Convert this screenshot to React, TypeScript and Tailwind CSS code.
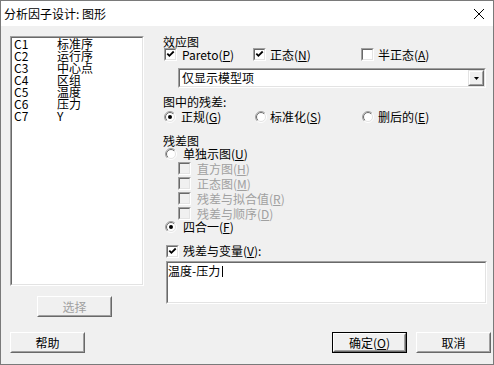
import React from "react";

function Check({ on, disabled }: { on?: boolean; disabled?: boolean }) {
  return (
    <div className="w-[13px] h-[13px] shrink-0 border border-t-[#a0a0a0] border-l-[#a0a0a0] border-r-white border-b-white">
      <div
        className={`w-full h-full border border-t-[#696969] border-l-[#696969] border-r-[#e3e3e3] border-b-[#e3e3e3] flex items-center justify-center ${
          disabled ? "bg-[#f0f0f0]" : "bg-white"
        }`}
      >
        {on && (
          <svg width="9" height="9" viewBox="0 0 9 9">
            <path d="M1.3 3.6 L3.4 5.8 L7.7 1.5" stroke="black" strokeWidth="1.8" fill="none" />
          </svg>
        )}
      </div>
    </div>
  );
}

function Radio({ on }: { on?: boolean }) {
  return (
    <svg width="12" height="12" viewBox="0 0 12 12" className="shrink-0">
      <defs>
        <linearGradient id="rgo" x1="0" y1="0" x2="1" y2="1">
          <stop offset="0.5" stopColor="#a0a0a0" />
          <stop offset="0.5" stopColor="#ffffff" />
        </linearGradient>
        <linearGradient id="rgi" x1="0" y1="0" x2="1" y2="1">
          <stop offset="0.5" stopColor="#696969" />
          <stop offset="0.5" stopColor="#e3e3e3" />
        </linearGradient>
      </defs>
      <circle cx="6" cy="6" r="5.5" fill="none" stroke="url(#rgo)" />
      <circle cx="6" cy="6" r="4.5" fill="white" stroke="url(#rgi)" />
      {on && <circle cx="6" cy="6" r="2" fill="black" />}
    </svg>
  );
}

function Btn({
  children,
  def,
  disabled,
  className = "",
}: {
  children: React.ReactNode;
  def?: boolean;
  disabled?: boolean;
  className?: string;
}) {
  const inner = (
    <div className="w-full h-full border border-t-white border-l-white border-r-[#696969] border-b-[#696969]">
      <div
        className={`w-full h-full border border-t-[#f0f0f0] border-l-[#f0f0f0] border-r-[#a0a0a0] border-b-[#a0a0a0] bg-[#f0f0f0] flex items-center justify-center text-[12px] ${
          disabled ? "text-[#a0a0a0]" : "text-black"
        }`}
      >
        {children}
      </div>
    </div>
  );
  if (def) {
    return <div className={`w-[75px] h-[21px] border border-black ${className}`}>{inner}</div>;
  }
  return <div className={`w-[75px] h-[21px] ${className}`}>{inner}</div>;
}

function Sunken({ className = "", children }: { className?: string; children?: React.ReactNode }) {
  return (
    <div className={`border border-t-[#a0a0a0] border-l-[#a0a0a0] border-r-white border-b-white ${className}`}>
      <div className="w-full h-full border border-t-[#696969] border-l-[#696969] border-r-[#e3e3e3] border-b-[#e3e3e3] bg-white">
        {children}
      </div>
    </div>
  );
}

const U = ({ c }: { c: string }) => <span className="underline underline-offset-1">{c}</span>;

export default function App() {
  const cols = [
    ["C1", "标准序"],
    ["C2", "运行序"],
    ["C3", "中心点"],
    ["C4", "区组"],
    ["C5", "温度"],
    ["C6", "压力"],
    ["C7", "Y"],
  ];
  const dis: [string, string][] = [
    ["直方图", "H"],
    ["正态图", "M"],
    ["残差与拟合值", "R"],
    ["残差与顺序", "D"],
  ];
  return (
    <div className="w-[494px] h-[365px] border border-[#7a7a7a] flex flex-col text-black font-['Noto_Sans_CJK_SC','Noto_Sans',sans-serif] text-[12px] leading-none">
      <div className="h-[25px] bg-white flex items-center justify-between pl-[3px] pr-[9px]">
        <span className="text-[12px]">分析因子设计: 图形</span>
        <svg width="10" height="10" viewBox="0 0 10 10">
          <path d="M0 0L10 10M10 0L0 10" stroke="black" strokeWidth="1" />
        </svg>
      </div>
      <div className="flex-1 bg-[#f0f0f0] flex flex-col">
        <div className="flex pt-[10px] pl-[9px]">
          <div className="w-[134px] flex flex-col">
            <Sunken className="h-[250px] w-[134px]">
              <div className="flex flex-col">
                {cols.map(([a, b]) => (
                  <div key={a} className="h-[12px] flex items-center">
                    <span className="w-[45px] pl-[2px]">{a}</span>
                    <span>{b}</span>
                  </div>
                ))}
              </div>
            </Sunken>
            <Btn disabled className="ml-[27px] mt-[10px]">
              选择
            </Btn>
          </div>
          <div className="ml-[19px] w-[324px] flex flex-col">
            <div className="h-[11px] flex items-center">效应图</div>
            <div className="mt-[1px] h-[13px] flex items-center">
              <div className="ml-[1px] w-[89px] flex items-center gap-[5px]">
                <Check on />
                <span>
                  Pareto(<U c="P" />)
                </span>
              </div>
              <div className="w-[108px] flex items-center gap-[4px]">
                <Check on />
                <span>
                  正态(<U c="N" />)
                </span>
              </div>
              <div className="flex items-center gap-[4px]">
                <Check />
                <span>
                  半正态(<U c="A" />)
                </span>
              </div>
            </div>
            <Sunken className="mt-[7px] ml-[15px] w-[308px] h-[20px]">
              <div className="w-full h-full flex items-center">
                <span className="pl-[2px] flex-1">仅显示模型项</span>
                <div className="w-[16px] h-full border border-t-[#e3e3e3] border-l-[#e3e3e3] border-r-[#696969] border-b-[#696969]">
                  <div className="w-full h-full border border-t-white border-l-white border-r-[#a0a0a0] border-b-[#a0a0a0] bg-[#f0f0f0] flex items-center justify-center">
                    <svg width="5" height="3" viewBox="0 0 5 3">
                      <polygon points="0,0 5,0 2.5,3" fill="black" />
                    </svg>
                  </div>
                </div>
              </div>
            </Sunken>
            <div className="mt-[8px] h-[12px] flex items-center">图中的残差:</div>
            <div className="mt-[3px] h-[12px] flex items-center">
              <div className="ml-[1px] w-[91px] flex items-center gap-[5px]">
                <Radio on />
                <span>
                  正规(<U c="G" />)
                </span>
              </div>
              <div className="w-[107px] flex items-center gap-[3px]">
                <Radio />
                <span>
                  标准化(<U c="S" />)
                </span>
              </div>
              <div className="flex items-center gap-[4px]">
                <Radio />
                <span>
                  删后的(<U c="E" />)
                </span>
              </div>
            </div>
            <div className="mt-[12px] h-[11px] flex items-center">残差图</div>
            <div className="h-[15px] ml-[2px] flex items-center gap-[6px]">
              <Radio />
              <span>
                单独示图(<U c="U" />)
              </span>
            </div>
            {dis.map(([t, k]) => (
              <div key={t} className="h-[15px] ml-[15px] flex items-center gap-[6px] text-[#a0a0a0]">
                <Check disabled />
                <span>
                  {t}(<U c={k} />)
                </span>
              </div>
            ))}
            <div className="h-[12px] ml-[2px] flex items-center gap-[6px]">
              <Radio on />
              <span>
                四合一(<U c="F" />)
              </span>
            </div>
            <div className="mt-[11px] h-[14px] ml-[3px] flex items-center gap-[4px]">
              <Check on />
              <span>
                残差与变量(<U c="V" />):
              </span>
            </div>
            <Sunken className="mt-[3px] ml-[3px] w-[321px] h-[43px]">
              <div className="pt-[2px] flex items-center h-[14px]">
                <span>温度-压力</span>
                <span className="ml-[2px] w-[1px] h-[11px] bg-black" />
              </div>
            </Sunken>
          </div>
        </div>
        <div className="flex items-center mt-[15px] pl-[9px] pr-[2px]">
          <Btn>帮助</Btn>
          <div className="ml-auto flex gap-[9px]">
            <Btn def>
              <span>
                确定(<U c="O" />)
              </span>
            </Btn>
            <Btn>取消</Btn>
          </div>
        </div>
      </div>
    </div>
  );
}
